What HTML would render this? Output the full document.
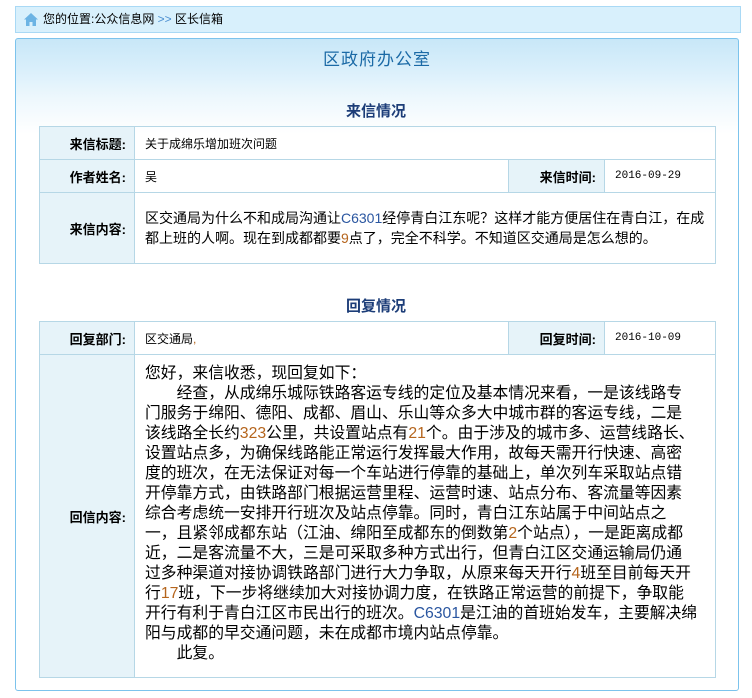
<!DOCTYPE html>
<html><head><meta charset="utf-8"><style>
*{margin:0;padding:0;box-sizing:border-box}
body{width:752px;height:698px;background:#fff;font-family:"Liberation Sans","Noto Sans CJK SC",sans-serif;color:#000;position:relative;overflow:hidden}
.abs{position:absolute}
.crumb{left:15px;top:6px;width:726px;height:27px;background:#d8f0fc;border:1px solid #a9d9f5;font-size:12px;line-height:25px;padding-left:27px}
.box{left:15px;top:38px;width:724px;height:653px;border:1px solid #7cc3ec;border-radius:3px;background:linear-gradient(#c8e7f8 0,#d9effb 30px,#eef8fd 60px,#fff 95px)}
.ttl{left:15px;width:724px;top:45px;text-align:center;font-size:17px;color:#1b6aa6;letter-spacing:1px}
.h{width:100%;text-align:center;font-size:15px;font-weight:bold;color:#1c3d78}
.t{border-collapse:collapse;position:absolute;left:39px;width:677px;font-size:12px}
.t td{border:1px solid #b6d7e6;vertical-align:middle}
.t td.l{background:#e6f3f9;font-weight:bold;text-align:right;padding-right:8px;font-size:13px}
.t td.v{padding-left:10px}
.big{font-size:14px;line-height:20px}
.n{color:#b5651d}.c{color:#2a56a0}
</style></head><body>
<div class="abs crumb"><svg class="abs" style="left:8px;top:6px" width="14" height="13" viewBox="0 0 14 13"><path d="M7 0L0 6.5h2V13h3.5V9h3v4H12V6.5h2z" fill="#6cb4e4"/></svg>您的位置:公众信息网 <span style="color:#4a8ed0">&gt;&gt;</span> 区长信箱</div>
<div class="abs box"></div>
<div class="abs ttl">区政府办公室</div>
<div class="abs h" style="top:100px;left:0">来信情况</div>
<table class="t" style="top:126px">
<colgroup><col style="width:95px"><col style="width:374px"><col style="width:96px"><col></colgroup>
<tr style="height:33px"><td class="l">来信标题:</td><td class="v" colspan="3">关于成绵乐增加班次问题</td></tr>
<tr style="height:33px"><td class="l">作者姓名:</td><td class="v">吴</td><td class="l">来信时间:</td><td class="v" style="font-family:'Liberation Mono',monospace;font-size:11px">2016-09-29</td></tr>
<tr style="height:71px"><td class="l">来信内容:</td><td class="v big" colspan="3" style="padding-top:0">区交通局为什么不和成局沟通让<span class="c">C6301</span>经停青白江东呢？这样才能方便居住在青白江，在成<br>都上班的人啊。现在到成都都要<span class="n">9</span>点了，完全不科学。不知道区交通局是怎么想的。</td></tr>
</table>
<div class="abs h" style="top:295px;left:0">回复情况</div>
<table class="t" style="top:321px">
<colgroup><col style="width:95px"><col style="width:374px"><col style="width:96px"><col></colgroup>
<tr style="height:33px"><td class="l">回复部门:</td><td class="v">区交通局<span class="n">,</span></td><td class="l">回复时间:</td><td class="v" style="font-family:'Liberation Mono',monospace;font-size:11px">2016-10-09</td></tr>
<tr style="height:323px"><td class="l">回信内容:</td><td class="v" colspan="3" style="white-space:nowrap;padding-top:9px;vertical-align:top;font-size:15.8px;line-height:20px">您好，来信收悉，现回复如下：<br>　　经查，从成绵乐城际铁路客运专线的定位及基本情况来看，一是该线路专<br>门服务于绵阳、德阳、成都、眉山、乐山等众多大中城市群的客运专线，二是<br>该线路全长约<span class="n">323</span>公里，共设置站点有<span class="n">21</span>个。由于涉及的城市多、运营线路长、<br>设置站点多，为确保线路能正常运行发挥最大作用，故每天需开行快速、高密<br>度的班次，在无法保证对每一个车站进行停靠的基础上，单次列车采取站点错<br>开停靠方式，由铁路部门根据运营里程、运营时速、站点分布、客流量等因素<br>综合考虑统一安排开行班次及站点停靠。同时，青白江东站属于中间站点之<br>一，且紧邻成都东站（江油、绵阳至成都东的倒数第<span class="n">2</span>个站点），一是距离成都<br>近，二是客流量不大，三是可采取多种方式出行，但青白江区交通运输局仍通<br>过多种渠道对接协调铁路部门进行大力争取，从原来每天开行<span class="n">4</span>班至目前每天开<br>行<span class="n">17</span>班，下一步将继续加大对接协调力度，在铁路正常运营的前提下，争取能<br>开行有利于青白江区市民出行的班次。<span class="c">C6301</span>是江油的首班始发车，主要解决绵<br>阳与成都的早交通问题，未在成都市境内站点停靠。<br>　　此复。</td></tr>
</table>
</body></html>
